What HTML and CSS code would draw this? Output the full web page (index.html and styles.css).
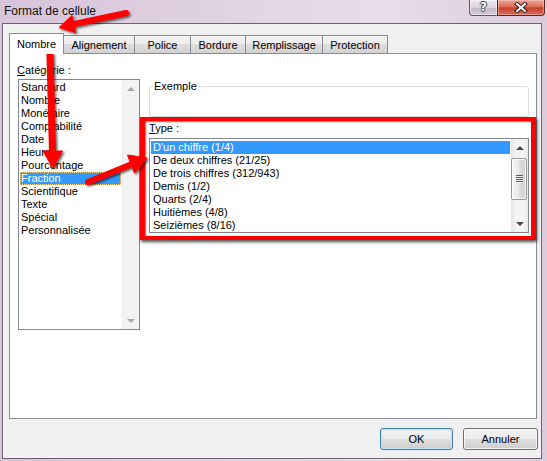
FILE: index.html
```html
<!DOCTYPE html>
<html lang="fr">
<head>
<meta charset="utf-8">
<title>Format de cellule</title>
<link rel="stylesheet" href="styles.css">
</head>
<body>
<div class="window">
  <div class="titlebar">
    <span class="title">Format de cellule</span>
    <div class="caption-btns">
      <div class="cbtn help">?</div>
      <div class="cbtn close">
        <svg width="14" height="11" viewBox="0 0 14 11">
          <path d="M3 2 L11 9 M11 2 L3 9" stroke="#3a1a1a" stroke-width="4" stroke-linecap="square"/>
          <path d="M3 2 L11 9 M11 2 L3 9" stroke="#fff" stroke-width="2" stroke-linecap="square"/>
        </svg>
      </div>
    </div>
  </div>

  <div class="client">
    <div class="tabs">
      <div class="tab active t-nombre">Nombre</div>
      <div class="tab t-align">Alignement</div>
      <div class="tab t-police">Police</div>
      <div class="tab t-bordure">Bordure</div>
      <div class="tab t-rempl">Remplissage</div>
      <div class="tab t-prot">Protection</div>
    </div>

    <div class="panel">
      <div class="left">
        <div class="label"><u>C</u>atégorie :</div>
        <div class="listbox catlist">
          <ul class="items">
            <li>Standard</li>
            <li>Nombre</li>
            <li>Monétaire</li>
            <li>Comptabilité</li>
            <li>Date</li>
            <li>Heure</li>
            <li>Pourcentage</li>
            <li class="sel focus">Fraction</li>
            <li>Scientifique</li>
            <li>Texte</li>
            <li>Spécial</li>
            <li>Personnalisée</li>
          </ul>
          <div class="vscroll disabled">
            <div class="sb-btn up"></div>
            <div class="sb-btn down"></div>
          </div>
        </div>
      </div>

      <div class="right">
        <fieldset class="sample">
          <legend>Exemple</legend>
          <div class="sample-body"></div>
        </fieldset>
        <div class="label type-label"><u>T</u>ype :</div>
        <div class="listbox typelist">
          <ul class="items">
            <li class="sel">D'un chiffre (1/4)</li>
            <li>De deux chiffres (21/25)</li>
            <li>De trois chiffres (312/943)</li>
            <li>Demis (1/2)</li>
            <li>Quarts (2/4)</li>
            <li>Huitièmes (4/8)</li>
            <li>Seizièmes (8/16)</li>
          </ul>
          <div class="vscroll">
            <div class="sb-btn up"></div>
            <div class="thumb"><span class="grip"></span></div>
            <div class="sb-btn down"></div>
          </div>
        </div>
      </div>
    </div>

    <div class="buttons">
      <button class="btn default">OK</button>
      <button class="btn cancel">Annuler</button>
    </div>
  </div>

  <div class="callout"></div>

  <svg class="arrows" width="547" height="461" viewBox="0 0 547 461">
    <defs>
      <filter id="sh" x="-30%" y="-30%" width="160%" height="160%">
        <feDropShadow dx="1.5" dy="1.5" stdDeviation="1.2" flood-color="#000" flood-opacity="0.65"/>
      </filter>
    </defs>
    <g fill="#ff0000" stroke="#ff0000" stroke-linejoin="round" filter="url(#sh)">
      <line x1="126" y1="13" x2="72" y2="24.5" stroke-width="6" stroke-linecap="round"/>
      <polygon points="59,27.5 72,15.5 75.5,32.5" stroke-width="1"/>
      <line x1="50" y1="55" x2="52.5" y2="152" stroke-width="7" stroke-linecap="round"/>
      <polygon points="53,168 43,151 62.5,151" stroke-width="1"/>
      <line x1="88" y1="182" x2="132" y2="164" stroke-width="6" stroke-linecap="round"/>
      <polygon points="147,158 127.5,155 134.5,173" stroke-width="1"/>
    </g>
  </svg>
</div>
</body>
</html>
```

FILE: styles.css
```css
* { box-sizing: border-box; }
html, body { margin: 0; padding: 0; }
body {
  width: 547px;
  height: 461px;
  overflow: hidden;
  font-family: "Liberation Sans", Arial, sans-serif;
  font-size: 11px;
  color: #000;
}

.window {
  position: relative;
  width: 547px;
  height: 461px;
  background: linear-gradient(to right, #d6c4d8 0%, #dfd0e1 35%, #e8dde9 70%, #dccbdd 100%);
}

/* title bar */
.titlebar {
  height: 23px;
  display: flex;
  justify-content: space-between;
  align-items: flex-start;
}
.title {
  font-size: 12px;
  line-height: 22px;
  padding-left: 4px;
  color: #111;
}
.caption-btns {
  display: flex;
  margin-right: 2px;
}
.cbtn {
  height: 16px;
  display: flex;
  align-items: center;
  justify-content: center;
}
.help {
  width: 28px;
  border: 1px solid #5f5668;
  border-top: none;
  border-right: none;
  border-radius: 0 0 0 4px;
  background: linear-gradient(#eee6ef 0%, #ddd1de 50%, #c7b9c9 51%, #d3c6d5 100%);
  color: #fff;
  font-family: "DejaVu Sans", sans-serif;
  font-weight: bold;
  font-size: 12px;
  line-height: 15px;
  text-shadow: 1px 0 #3d3a44, -1px 0 #3d3a44, 0 1px #3d3a44, 0 -1px #3d3a44;
  box-shadow: inset 0 0 0 1px rgba(255,255,255,0.5);
}
.close {
  width: 48px;
  border: 1px solid #5a2424;
  border-top: none;
  border-radius: 0 0 4px 0;
  background: linear-gradient(#eaa698 0%, #dd6e57 45%, #c7402c 52%, #d66f5a 100%);
  box-shadow: inset 0 0 0 1px rgba(255,210,200,0.45);
}

/* client area */
.client {
  margin-left: 2px;
  width: 540px;
  height: 436px;
  border: 1px solid #6b6470;
  background: #f0f0f0;
  padding: 9px 3px 0 6px;
}

/* tabs */
.tabs {
  display: flex;
  align-items: flex-end;
  height: 20px;
}
.tab {
  height: 18px;
  border: 1px solid #898c95;
  border-bottom: none;
  margin-left: -1px;
  padding-top: 1px;
  line-height: 16px;
  text-align: center;
  background: linear-gradient(#f4f4f4 0%, #ececec 45%, #dedede 50%, #d2d2d2 100%);
}
.tab.active {
  height: 21px;
  margin-left: 0;
  margin-bottom: -1px;
  padding-top: 2px;
  background: #fff;
  position: relative;
  z-index: 1;
}
.t-nombre { width: 55px; }
.t-align { width: 72px; }
.t-police { width: 57px; }
.t-bordure { width: 56px; }
.t-rempl { width: 78px; }
.t-prot { width: 66px; }

/* panel */
.panel {
  width: 528px;
  height: 366px;
  border: 1px solid #898c95;
  background: #fff;
  display: flex;
  align-items: flex-start;
}
.left {
  padding: 10px 0 0 7px;
}
.label {
  height: 13px;
  line-height: 13px;
  white-space: nowrap;
}
.right {
  margin-left: 9px;
  padding-top: 26px;
  width: 380px;
}

/* list boxes */
.listbox {
  display: flex;
  border: 1px solid #828790;
  background: #fff;
}
.catlist {
  margin: 2px 0 0 1px;
  width: 122px;
  height: 251px;
}
.typelist {
  margin-top: 3px;
  width: 380px;
  height: 95px;
}
.items {
  flex: 1;
  list-style: none;
  margin: 0;
  padding: 1px 1px 0 1px;
}
.typelist .items { padding-top: 2px; }
.items li {
  height: 13px;
  line-height: 13px;
  padding-left: 1px;
  white-space: nowrap;
}
.typelist .items li { padding-left: 2px; }
.items li.sel {
  background: #3399ff;
  color: #fff;
}
.items li.focus {
  outline: 1px dotted #f6d98c;
  outline-offset: -1px;
}

/* scroll bars */
.vscroll {
  width: 17px;
  display: flex;
  flex-direction: column;
  background: linear-gradient(to right, #e4e4e4 0%, #f3f3f3 25%, #f5f5f5 75%, #e8e8e8 100%);
}
.vscroll.disabled {
  background: #f3f3f3;
  border-left: 1px solid #ececec;
}
.sb-btn {
  height: 17px;
  display: flex;
  align-items: center;
  justify-content: center;
}
.sb-btn.down { margin-top: auto; }
.sb-btn.up::before {
  content: "";
  border-left: 4px solid transparent;
  border-right: 4px solid transparent;
  border-bottom: 4px solid #4a4a4a;
}
.sb-btn.down::before {
  content: "";
  border-left: 4px solid transparent;
  border-right: 4px solid transparent;
  border-top: 4px solid #4a4a4a;
}
.vscroll.disabled .sb-btn.up::before { border-bottom-color: #a8a8a8; }
.vscroll.disabled .sb-btn.down::before { border-top-color: #a8a8a8; }

.thumb {
  margin: 2px 1px 0 0;
  height: 42px;
  border: 1px solid #979797;
  border-radius: 2px;
  background: linear-gradient(to right, #f4f4f4 0%, #ebebeb 45%, #dcdcdc 55%, #d2d2d2 100%);
  box-shadow: inset 0 0 0 1px rgba(255,255,255,0.8);
  display: flex;
  align-items: center;
  justify-content: center;
}
.grip {
  width: 7px;
  height: 8px;
  background: repeating-linear-gradient(#5a5a5a 0 1px, #f4f4f4 1px 2px);
}

/* sample group */
.sample {
  margin: 0;
  padding: 0 0 0 3px;
  border: 1px solid #d5dfe5;
  border-radius: 3px;
  width: 380px;
}
.sample legend {
  padding: 0 1px;
  line-height: 13px;
}
.sample-body { height: 23px; }
.type-label { margin-top: 5px; }

/* buttons */
.buttons {
  display: flex;
  justify-content: flex-end;
  gap: 10px;
  margin-top: 9px;
}
.btn {
  height: 22px;
  width: 73px;
  padding: 0;
  border: 1px solid #707070;
  border-radius: 3px;
  font-family: "Liberation Sans", Arial, sans-serif;
  font-size: 11px;
  color: #000;
  background: linear-gradient(#f2f2f2 0%, #ebebeb 50%, #dddddd 51%, #cfcfcf 100%);
  box-shadow: inset 0 0 0 1px rgba(255,255,255,0.75);
}
.btn.default {
  border-color: #3c7fb1;
  box-shadow: inset 0 0 0 1px #bde6fb;
}
.btn.cancel { width: 75px; }

/* annotations */
.callout {
  position: absolute;
  left: 140px;
  top: 117px;
  width: 396px;
  height: 123px;
  border: 4px solid #ff0000;
  border-left-width: 5px;
  border-right-width: 5px;
  box-shadow: 1px 2px 3px rgba(0,0,0,0.7), inset 1px 1px 2px rgba(0,0,0,0.55);
}
.arrows {
  position: absolute;
  left: 0;
  top: 0;
  pointer-events: none;
}
```
